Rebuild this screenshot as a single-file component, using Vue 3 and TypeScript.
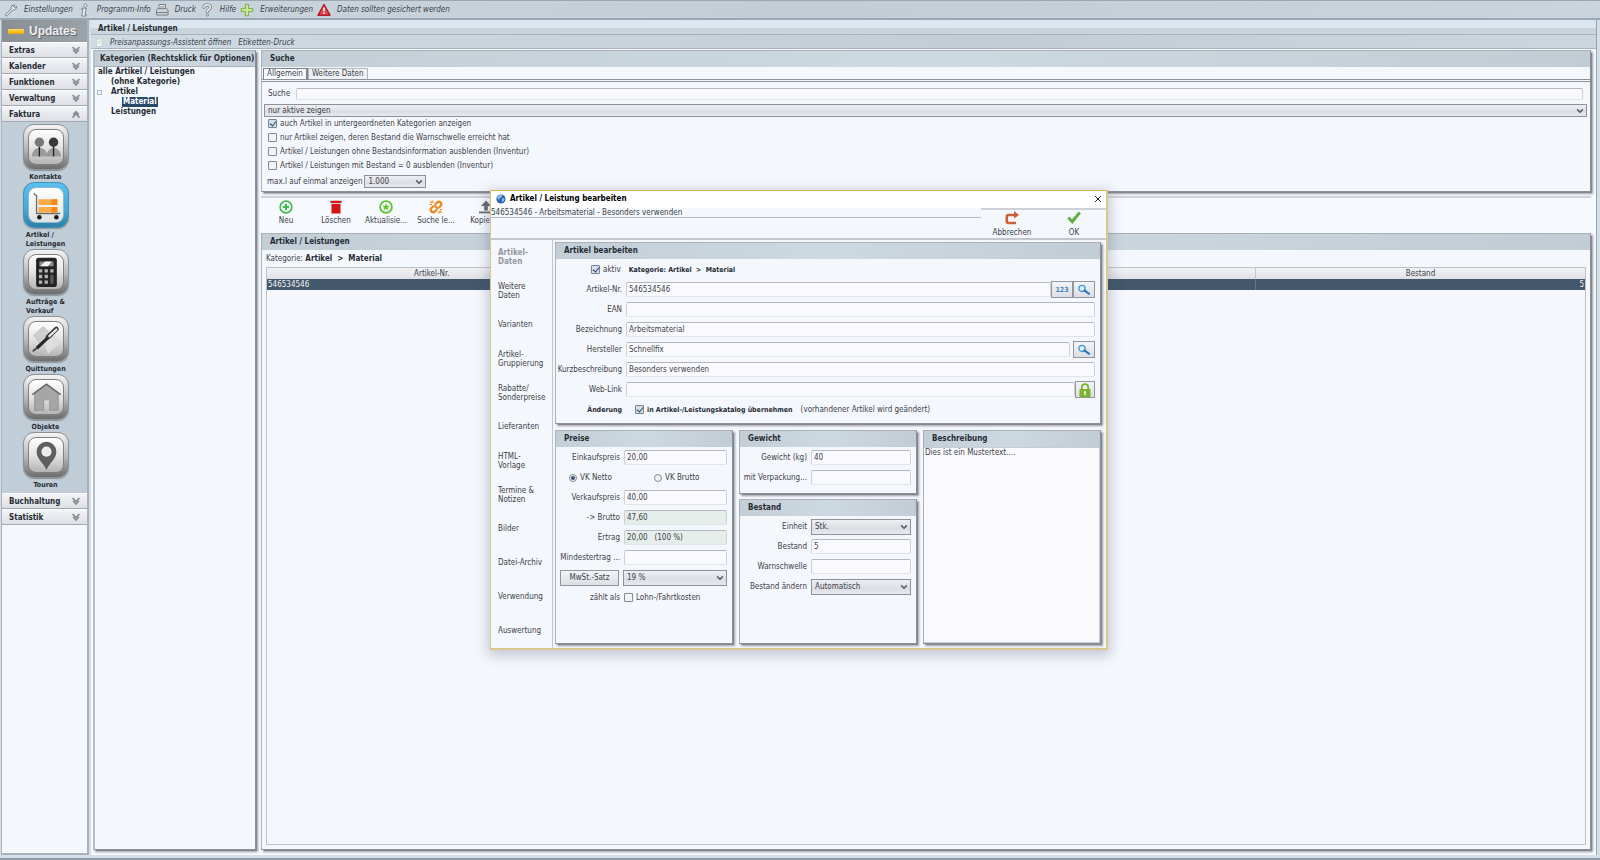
<script setup lang="ts">
import { ref } from 'vue'

type MenuItem = { icon: string; label: string }
type Tile = { icon: string; lines: string[]; active?: boolean }
type Row = { nr: string; bestand: number }

const menu: MenuItem[] = [
  { icon: 'wrench', label: 'Einstellungen' },
  { icon: 'info', label: 'Programm-Info' },
  { icon: 'printer', label: 'Druck' },
  { icon: 'help', label: 'Hilfe' },
  { icon: 'plus', label: 'Erweiterungen' },
  { icon: 'warn', label: 'Daten sollten gesichert werden' },
]
const sectionsTop = ['Extras', 'Kalender', 'Funktionen', 'Verwaltung', 'Faktura']
const sectionsBottom = ['Buchhaltung', 'Statistik']
const tiles: Tile[] = [
  { icon: 'people', lines: ['Kontakte'] },
  { icon: 'cart', lines: ['Artikel /', 'Leistungen'], active: true },
  { icon: 'calc', lines: ['Aufträge &', 'Verkauf'] },
  { icon: 'pen', lines: ['Quittungen'] },
  { icon: 'house', lines: ['Objekte'] },
  { icon: 'pin', lines: ['Touren'] },
]
const tools: MenuItem[] = [
  { icon: 'new', label: 'Neu' },
  { icon: 'trash', label: 'Löschen' },
  { icon: 'refresh', label: 'Aktualisie...' },
  { icon: 'unlink', label: 'Suche le...' },
  { icon: 'copy', label: 'Kopieren' },
]
const dialogNav: string[][] = [
  ['Artikel-', 'Daten'],
  ['Weitere', 'Daten'],
  ['Varianten'],
  ['Artikel-', 'Gruppierung'],
  ['Rabatte/', 'Sonderpreise'],
  ['Lieferanten'],
  ['HTML-', 'Vorlage'],
  ['Termine &', 'Notizen'],
  ['Bilder'],
  ['Datei-Archiv'],
  ['Verwendung'],
  ['Auswertung'],
]
const rows: Row[] = [{ nr: '546534546', bestand: 5 }]

const filters = ref([
  { label: 'auch Artikel in untergeordneten Kategorien anzeigen', on: true },
  { label: 'nur Artikel zeigen, deren Bestand die Warnschwelle erreicht hat', on: false },
  { label: 'Artikel / Leistungen ohne Bestandsinformation ausblenden (Inventur)', on: false },
  { label: 'Artikel / Leistungen mit Bestand = 0 ausblenden (Inventur)', on: false },
])
const search = ref('')
const item = ref({
  aktiv: true,
  nr: '546534546',
  ean: '',
  bezeichnung: 'Arbeitsmaterial',
  hersteller: 'Schnellfix',
  kurz: 'Besonders verwenden',
  link: '',
  katalog: true,
  einkauf: '20,00',
  vk: 'netto',
  verkauf: '40,00',
  brutto: '47,60',
  ertrag: '20,00   (100 %)',
  mindest: '',
  lohn: false,
  gewicht: '40',
  verpackung: '',
  bestand: '5',
  warn: '',
  text: 'Dies ist ein Mustertext....',
})
</script>

<template>
  <div class="app">
    <svg class="defs" width="0" height="0" aria-hidden="true">
      <symbol id="chev" viewBox="0 0 8 6"><path d="M1.2 1.4 4 4.2 6.8 1.4" fill="none" stroke="#555c64" stroke-width="1.5" /></symbol>
      <symbol id="lens" viewBox="0 0 14 12">
        <circle cx="5" cy="4.4" r="3.1" fill="#e3f1fb" stroke="#3f9ad8" stroke-width="1.3" />
        <path d="M7.4 6.4 12 9.8" stroke="#2b6cb4" stroke-width="2" stroke-linecap="round" />
      </symbol>
    </svg>

    <nav class="menubar">
      <a v-for="m in menu" :key="m.label" href="#" class="menu-item">
        <svg class="menu-icon" viewBox="0 0 14 14" aria-hidden="true">
          <path v-if="m.icon === 'wrench'" d="M1.5 11.6 7.2 6C6.6 3.8 8.3 1.6 10.8 2L9.4 3.6 10.6 4.8 12.4 3.4C13 5.8 10.8 7.6 8.5 7.1L3 12.8C1.8 13.4 1 12.6 1.5 11.6Z" fill="#eceff2" stroke="#757c84" stroke-width="1" />
          <g v-else-if="m.icon === 'info'" fill="#f0f2f4" stroke="#737a82" stroke-width=".9">
            <circle cx="8.4" cy="2.4" r="1.6" />
            <path d="M5 5.2H9.2L7.9 11.4H9.4L9 13H4.6L6 6.8H4.6Z" />
          </g>
          <g v-else-if="m.icon === 'printer'" stroke="#797f86" stroke-width="1">
            <path d="M4 1.5H10.5V7H4Z" fill="#eef0f2" />
            <path d="M1.5 7 3 5.6H11.6L13 7V12H1.5Z" fill="#d0d4d8" />
            <path d="M2 9.5H12.6" /><path d="M5 3.3H9.6M5 4.8H9.6" stroke-width=".6" />
          </g>
          <g v-else-if="m.icon === 'help'" fill="none" stroke-linecap="round">
            <path d="M4 4.2C4 .9 10.6 1 10.4 4.4 10.2 6.6 7.3 6.4 7.2 8.9" stroke="#7b828a" stroke-width="3.2" />
            <path d="M4 4.2C4 .9 10.6 1 10.4 4.4 10.2 6.6 7.3 6.4 7.2 8.9" stroke="#f1f3f5" stroke-width="1.5" />
            <circle cx="7.2" cy="12" r="1.2" fill="#f1f3f5" stroke="#7b828a" stroke-width=".8" />
          </g>
          <path v-else-if="m.icon === 'plus'" d="M5.4 1.4H8.6V5.6H12.8V8.6H8.6V12.8H5.4V8.6H1.2V5.6H5.4Z" fill="#cdea9c" stroke="#74a83c" stroke-width=".9" />
          <g v-else>
            <path d="M7 1.6 13 12.2H1Z" fill="#e04a4f" stroke="#b01f2a" stroke-width="1.4" stroke-linejoin="round" />
            <path d="M7 4.4V8.4M7 9.6V11" stroke="#fff" stroke-width="1.5" />
          </g>
        </svg>
        {{ m.label }}
      </a>
    </nav>

    <div class="body">
      <aside class="sidebar">
        <button type="button" class="updates"><i class="dash"></i>Updates</button>
        <button v-for="s in sectionsTop" :key="s" type="button" class="section">
          {{ s }}
          <svg viewBox="0 0 10 9" class="dbl" aria-hidden="true">
            <path v-if="s !== 'Faktura'" d="M1.5 1 5 4.4 8.5 1M2 3.8 5 7 8 3.8" />
            <path v-else d="M1.5 7.6 5 4 8.5 7.6M2.2 4.6 5 1.6 7.8 4.6" />
          </svg>
        </button>
        <div class="tiles">
          <button v-for="t in tiles" :key="t.icon" type="button" class="tile" :class="{ active: t.active }">
            <span class="tile-frame">
              <svg viewBox="0 0 36 36" aria-hidden="true">
                <g v-if="t.icon === 'people'">
                  <path d="M3 28C4 20 8 19 11 19S17 20 19 25C21 20 24 19 26 19S33 20 34 28Z" fill="#9b9b9b" />
                  <path d="M11 17V28M26 17V28" stroke="#222" stroke-width="1.4" />
                  <circle cx="11" cy="13" r="5" fill="#777" /><circle cx="26" cy="13" r="5" fill="#3a3a3a" />
                </g>
                <g v-else-if="t.icon === 'cart'">
                  <path d="M5 6 8 8V27H33" fill="none" stroke="#6c6c6c" stroke-width="1.4" />
                  <path d="M10 12H30V18H10ZM10 20H30V26H10Z" fill="#fbab4a" />
                  <path d="M24 12H30V18H24ZM24 20H30V26H24Z" fill="#f58a17" />
                  <circle cx="11" cy="31" r="2.4" fill="#1a1a1a" /><circle cx="29" cy="31" r="2.4" fill="#1a1a1a" />
                </g>
                <g v-else-if="t.icon === 'calc'">
                  <rect x="7.5" y="3" width="22" height="31" rx="2.5" fill="#232323" />
                  <path d="M11 7H26V12H11Z" fill="#8c8c8c" /><path d="M17 7H24L20 12H12Z" fill="#f2f2f2" />
                  <path d="M10.5 15H14V18.5H10.5ZM16.5 15H20V18.5H16.5ZM22.5 15H26V18.5H22.5ZM10.5 21H14V24.5H10.5ZM16.5 21H20V24.5H16.5ZM10.5 27H14V30.5H10.5ZM16.5 27H20V30.5H16.5Z" fill="#b5b5b5" />
                  <path d="M22.5 21H26V30.5H22.5Z" fill="#5a5a5a" />
                </g>
                <g v-else-if="t.icon === 'pen'">
                  <path d="M5 14 15 5 32 22 20 33Z" fill="#cfcfcf" stroke="#bcbcbc" />
                  <path d="M15 18 22 13 33 22 20 34Z" fill="#dedede" />
                  <path d="M9 27 26 11" stroke="#262626" stroke-width="3.4" stroke-linecap="round" />
                  <path d="M20 16 29 7.5" stroke="#333" stroke-width="5" stroke-linecap="round" />
                  <path d="M21.5 15 29 8" stroke="#e8e8e8" stroke-width="2.4" stroke-linecap="round" />
                  <path d="M4 31 9 27" stroke="#444" stroke-width="2" />
                </g>
                <g v-else-if="t.icon === 'house'">
                  <path d="M6 15 18.5 5 31 15V32H22V21H15.5V32H6Z" fill="#a6a6a6" stroke="#8d8d8d" stroke-width=".8" />
                  <path d="M3.5 15.5 18.5 4.500 33.5 15.5" fill="none" stroke="#666" stroke-width="1.6" />
                </g>
                <g v-else>
                  <path d="M18.5 34C16 27 8 22 8 14.5A10.5 10.5 0 0 1 29 14.5C29 22 21 27 18.5 34Z" fill="#5e5e5e" />
                  <circle cx="18.5" cy="14.5" r="5.4" fill="#ececec" />
                </g>
              </svg>
            </span>
            <span class="tile-label"><span v-for="l in t.lines" :key="l">{{ l }}</span></span>
          </button>
        </div>
        <button v-for="s in sectionsBottom" :key="s" type="button" class="section">
          {{ s }}
          <svg viewBox="0 0 10 9" class="dbl" aria-hidden="true"><path d="M1.5 1 5 4.4 8.5 1M2 3.8 5 7 8 3.8" /></svg>
        </button>
        <div class="side-rest"></div>
      </aside>

      <main class="main">
        <h1 class="page-title">Artikel / Leistungen</h1>
        <nav class="submenu">
          <svg class="doc" viewBox="0 0 8 10" aria-hidden="true"><path d="M.5 1H7V9.5H.5Z" fill="#f3f6f3" stroke="#b9c6bd" stroke-width=".7" /><path d="M2 3.5H6M2 5.5H5" stroke="#c5d6bd" /></svg>
          <a href="#">Preisanpassungs-Assistent öffnen</a>
          <a href="#">Etiketten-Druck</a>
        </nav>

        <div class="content">
          <section class="panel categories">
            <h2>Kategorien (Rechtsklick für Optionen)</h2>
            <ul class="tree">
              <li class="l0">alle Artikel / Leistungen</li>
              <li class="l1">(ohne Kategorie)</li>
              <li class="l1"><button type="button" class="toggle" aria-label="Artikel einklappen"></button>Artikel</li>
              <li class="l2"><span class="sel">Material</span></li>
              <li class="l1">Leistungen</li>
            </ul>
          </section>

          <div class="right">
            <section class="panel search">
              <h2>Suche</h2>
              <div class="tabs">
                <button type="button" class="tab on">Allgemein</button>
                <button type="button" class="tab">Weitere Daten</button>
              </div>
              <div class="search-body">
                <div class="search-line">
                  <label for="q">Suche</label>
                  <input id="q" v-model="search" type="text" class="field" />
                </div>
                <span class="select wide">
                  <select aria-label="Status"><option>nur aktive zeigen</option></select>
                  <svg class="arrow"><use href="#chev" /></svg>
                </span>
                <label v-for="f in filters" :key="f.label" class="check">
                  <input v-model="f.on" type="checkbox" />{{ f.label }}
                </label>
                <div class="max-line">
                  <label for="max">max.l auf einmal anzeigen</label>
                  <span class="select">
                    <select id="max"><option>1.000</option></select>
                    <svg class="arrow"><use href="#chev" /></svg>
                  </span>
                </div>
              </div>
            </section>

            <div class="toolbar">
              <button v-for="t in tools" :key="t.icon" type="button" class="tool">
                <svg viewBox="0 0 14 14" aria-hidden="true">
                  <g v-if="t.icon === 'new'" fill="none" stroke="#3fb950"><circle cx="7" cy="7" r="5.9" stroke-width="1.6" /><path d="M7 3.8V10.2M3.8 7H10.2" stroke-width="2" /></g>
                  <path v-else-if="t.icon === 'trash'" d="M1.5 .8H12.5V3H1.5ZM2.5 3.8H11.5V13.5H2.5Z" fill="#d3121b" />
                  <g v-else-if="t.icon === 'refresh'"><circle cx="7" cy="7" r="5.9" fill="none" stroke="#5cc32a" stroke-width="1.8" /><path d="M7 3.2 8 5.8 10.8 5.9 8.6 7.6 9.4 10.3 7 8.7 4.6 10.3 5.4 7.6 3.2 5.9 6 5.8Z" fill="#5cc32a" /></g>
                  <g v-else-if="t.icon === 'unlink'" fill="none" stroke="#ee8a1c" stroke-width="2.3">
                    <path d="M6 4.500 8.5 2.2C10.8 .8 13.4 3.5 11.8 5.8L9.5 8" /><path d="M8 9.500 5.500 11.800C3.200 13.200 .6 10.500 2.200 8.200L4.500 6" /><path d="M5 5 9 9" />
                    <path d="M.6 4.500H3M4 .6V3M13.4 9.500H11M10 13.400V11M1.200 1.200 3 3M12.800 12.800 11 11" stroke-width="1.2" />
                  </g>
                  <g v-else fill="#6b6e72"><path d="M7 .5 12 6H8.8V10.5H5.2V6H2Z" /><path d="M0 11.5H14V13.3H0Z" /></g>
                </svg>
                {{ t.label }}
              </button>
            </div>

            <section class="panel list">
              <h2>Artikel / Leistungen</h2>
              <p class="crumb">Kategorie: <strong>Artikel&nbsp; &gt;&nbsp; Material</strong></p>
              <div class="table-box">
                <table>
                  <thead><tr><th>Artikel-Nr.</th><th></th><th></th><th>Bestand</th></tr></thead>
                  <tbody><tr v-for="r in rows" :key="r.nr"><td>{{ r.nr }}</td><td></td><td></td><td class="num">{{ r.bestand }}</td></tr></tbody>
                </table>
              </div>
            </section>
          </div>
        </div>
      </main>
    </div>

    <div class="overlay">
      <div class="dialog" role="dialog" aria-labelledby="dlg-title">
        <header class="dlg-title">
          <svg class="globe" viewBox="0 0 10 10" aria-hidden="true"><circle cx="5" cy="5" r="4.6" fill="#2c67b0" /><path d="M1.5 3C3 .8 5.5 .8 6.5 1.5 6 3 4 3.5 3 5.5 2 5.5 1 4.5 1.5 3ZM6 4.5 8.5 4C8.5 6.5 7.5 8 6 8Z" fill="#8fc0ea" /></svg>
          <strong id="dlg-title">Artikel / Leistung bearbeiten</strong>
          <button type="button" class="close" aria-label="Schließen"><svg viewBox="0 0 8 8"><path d="M1 1 7 7M7 1 1 7" stroke="#222" stroke-width="1" /></svg></button>
        </header>
        <div class="dlg-bar">
          <p class="dlg-sub">546534546 - Arbeitsmaterial - Besonders verwenden</p>
          <div class="dlg-actions">
            <button type="button" class="tool">
              <svg viewBox="0 0 14 14" aria-hidden="true"><path d="M9.5 4H3.5Q1.8 4 1.8 5.7V10.3Q1.8 12 3.5 12H11" fill="none" stroke="#c9603a" stroke-width="2.6" /><path d="M9 0 14 4 9 7.6Z" fill="#c9603a" /></svg>
              Abbrechen
            </button>
            <button type="button" class="tool">
              <svg viewBox="0 0 14 14" aria-hidden="true"><path d="M.3 7.5 2.3 5.5 5 8.2 11.8 .5 13.8 2.4 5.3 13Z" fill="#5fae46" /></svg>
              OK
            </button>
          </div>
        </div>
        <div class="dlg-body">
          <nav class="dlg-nav">
            <a v-for="(n, i) in dialogNav" :key="i" href="#" :class="{ current: i === 0 }"><span v-for="l in n" :key="l">{{ l }}</span></a>
          </nav>
          <div class="dlg-content">
            <section class="panel edit">
              <h2>Artikel bearbeiten</h2>
              <div class="rows">
                <div class="row aktiv">
                  <label class="check"><input v-model="item.aktiv" type="checkbox" />aktiv</label>
                  <strong>Kategorie: Artikel&nbsp; &gt;&nbsp; Material</strong>
                </div>
                <div class="row">
                  <label for="nr">Artikel-Nr.</label>
                  <span class="joined">
                    <input id="nr" v-model="item.nr" type="text" class="field" />
                    <button type="button" class="btn num123">123</button><button type="button" class="btn" aria-label="Artikel-Nr. suchen"><svg class="lens"><use href="#lens" /></svg></button>
                  </span>
                </div>
                <div class="row"><label for="ean">EAN</label><input id="ean" v-model="item.ean" type="text" class="field" /></div>
                <div class="row"><label for="bez">Bezeichnung</label><input id="bez" v-model="item.bezeichnung" type="text" class="field" /></div>
                <div class="row">
                  <label for="her">Hersteller</label>
                  <span class="joined spaced">
                    <input id="her" v-model="item.hersteller" type="text" class="field" />
                    <button type="button" class="btn" aria-label="Hersteller suchen"><svg class="lens"><use href="#lens" /></svg></button>
                  </span>
                </div>
                <div class="row"><label for="kurz">Kurzbeschreibung</label><input id="kurz" v-model="item.kurz" type="text" class="field" /></div>
                <div class="row">
                  <label for="link">Web-Link</label>
                  <span class="joined">
                    <input id="link" v-model="item.link" type="text" class="field" />
                    <button type="button" class="btn lock" aria-label="Link öffnen"><svg viewBox="0 0 14 14"><path d="M3.8 7V4.2C3.8 .2 10.2 .2 10.2 4.2V7" fill="none" stroke="#7cb32c" stroke-width="1.8" /><path d="M1.5 6H12.5V14H1.5Z" fill="#7cb32c" /><path d="M7 8.3V12M6 9H7" stroke="#fff" stroke-width="1.4" /></svg></button>
                  </span>
                </div>
                <div class="row change">
                  <strong>Änderung</strong>
                  <span><label class="check"><input v-model="item.katalog" type="checkbox" /><strong>in Artikel-/Leistungskatalog übernehmen</strong></label><span>(vorhandener Artikel wird geändert)</span></span>
                </div>
              </div>
            </section>

            <div class="cols">
              <section class="panel prices">
                <h2>Preise</h2>
                <div class="rows">
                  <div class="row"><label for="ek">Einkaufspreis</label><input id="ek" v-model="item.einkauf" type="text" class="field" /></div>
                  <div class="row radios">
                    <label class="check"><input v-model="item.vk" type="radio" name="vk" value="netto" />VK Netto</label>
                    <label class="check"><input v-model="item.vk" type="radio" name="vk" value="brutto" />VK Brutto</label>
                  </div>
                  <div class="row"><label for="vkp">Verkaufspreis</label><input id="vkp" v-model="item.verkauf" type="text" class="field" /></div>
                  <div class="row"><label for="br">-&gt; Brutto</label><input id="br" :value="item.brutto" type="text" class="field calc" readonly /></div>
                  <div class="row"><label for="er">Ertrag</label><input id="er" :value="item.ertrag" type="text" class="field calc" readonly /></div>
                  <div class="row"><label for="me">Mindestertrag ...</label><input id="me" v-model="item.mindest" type="text" class="field" /></div>
                  <div class="row tax">
                    <button type="button" class="btn">MwSt.-Satz</button>
                    <span class="select tall"><select aria-label="MwSt.-Satz"><option>19 %</option></select><svg class="arrow"><use href="#chev" /></svg></span>
                  </div>
                  <div class="row"><span class="lbl">zählt als</span><label class="check"><input v-model="item.lohn" type="checkbox" />Lohn-/Fahrtkosten</label></div>
                </div>
              </section>

              <div class="stack">
                <section class="panel weight">
                  <h2>Gewicht</h2>
                  <div class="rows">
                    <div class="row"><label for="kg">Gewicht (kg)</label><input id="kg" v-model="item.gewicht" type="text" class="field" /></div>
                    <div class="row"><label for="vp">mit Verpackung...</label><input id="vp" v-model="item.verpackung" type="text" class="field" /></div>
                  </div>
                </section>
                <section class="panel stock">
                  <h2>Bestand</h2>
                  <div class="rows">
                    <div class="row"><label for="eh">Einheit</label><span class="select tall"><select id="eh"><option>Stk.</option></select><svg class="arrow"><use href="#chev" /></svg></span></div>
                    <div class="row"><label for="be">Bestand</label><input id="be" v-model="item.bestand" type="text" class="field" /></div>
                    <div class="row"><label for="wa">Warnschwelle</label><input id="wa" v-model="item.warn" type="text" class="field" /></div>
                    <div class="row"><label for="ba">Bestand ändern</label><span class="select tall"><select id="ba"><option>Automatisch</option></select><svg class="arrow"><use href="#chev" /></svg></span></div>
                  </div>
                </section>
              </div>

              <section class="panel desc">
                <h2 id="desc-h">Beschreibung</h2>
                <textarea v-model="item.text" aria-labelledby="desc-h"></textarea>
              </section>
            </div>
          </div>
        </div>
      </div>
    </div>
  </div>
</template>

<style>
body { background: #cfdae2; }
</style>

<style scoped>
* { box-sizing: border-box; }
.app {
  position: relative;
  display: flex;
  flex-direction: column;
  min-height: 100vh;
  font: 8px/10px "DejaVu Sans Condensed", "DejaVu Sans", sans-serif;
  color: #3c4249;
  background: #d5dfe7;
  border-bottom: 2px solid #8f9ba8;
}
.defs { position: absolute; }
h1, h2, p, ul { margin: 0; padding: 0; font-size: inherit; }
button, input, select, textarea { font: inherit; color: inherit; margin: 0; padding: 0; border: 0; border-radius: 0; background: none; outline: 0; }
button { cursor: pointer; }
a { color: inherit; text-decoration: none; }
strong { color: #262c34; }

.menubar {
  display: flex;
  gap: 4px;
  height: 20px;
  padding: 0 4px;
  align-items: center;
  font-style: italic;
  background: linear-gradient(90deg, #cbd6de, #c3cdd6 50%, #cad4dc);
  border-top: 1px solid #9ba7b3;
  border-bottom: 2px solid #9aa7b4;
}
.menu-item { display: flex; align-items: center; gap: 6px; white-space: nowrap; }
.menu-icon { width: 14px; height: 14px; }

.body { display: flex; flex: 1; padding: 0 3px 3px 1px; }
.sidebar {
  display: flex;
  flex-direction: column;
  width: 88px;
  background: linear-gradient(90deg, #c3cfd8, #bfcbd5);
  border: 1px solid #a7b2be;
  border-width: 0 2px 2px 1px;
}
.updates {
  display: flex;
  align-items: center;
  gap: 5px;
  height: 22px;
  padding-left: 6px;
  font: bold 12px/14px "Liberation Sans", Arial, sans-serif;
  color: #eceef0;
  text-shadow: 1px 1px 1px #5c6268;
  background: linear-gradient(90deg, #878e94, #9ba2a8);
}
.dash { width: 16px; height: 5px; border-radius: 1px; background: linear-gradient(#ffd95a, #f0a800); }
.section {
  display: flex;
  align-items: center;
  justify-content: space-between;
  height: 16px;
  padding: 1px 6px 0 7px;
  font-weight: bold;
  color: #262c34;
  text-align: left;
  background: linear-gradient(#f3f4f7, #dddfe5);
  border-bottom: 1px solid #a3a8b2;
  border-top: 1px solid #fdfdfe;
}
.dbl { width: 10px; height: 9px; fill: none; stroke: #8a8f95; stroke-width: 1.6px; }
.tiles { display: flex; flex-direction: column; align-items: center; padding: 2px 0 3px 2px; }
.tile { display: flex; flex-direction: column; align-items: center; }
.tile-frame {
  width: 46px;
  height: 46px;
  padding: 4px;
  border-radius: 11px;
  background: linear-gradient(#f4f4f4, #b5b5b5 55%, #6d6d6d);
  border: 1px solid #8e9296;
  box-shadow: 0 1px 1px #8a949c;
}
.tile-frame svg {
  display: block;
  width: 36px;
  height: 36px;
  border: 1px solid #808080;
  border-radius: 8px;
  background: linear-gradient(#ffffff, #e4e4e4 50%, #b4b4b4);
}
.tile.active .tile-frame { background: linear-gradient(#56c0ee, #4aa8d4 60%, #2c7fa8); border-color: #4b8fb2; }
.tile.active svg { border-color: #8fb9cc; background: linear-gradient(#ffffff, #dfe2e4); }
.tile-label { display: flex; flex-direction: column; padding: 3px 0 0; font-size: 7px; font-weight: bold; line-height: 9px; color: #262c34; text-align: left; }
.side-rest { flex: 1; background: #f4f7fc; border-bottom: 1px solid #fff; }

.main {
  flex: 1;
  display: flex;
  flex-direction: column;
  min-width: 0;
  margin-left: 2px;
  background: #f6f9fd;
  border-right: 1px solid #97a4b0;
}
.page-title { height: 15px; padding: 4px 7px 0; font-weight: bold; color: #262c34; background: linear-gradient(#dbe6ee 8px, #c9d4dc 8px); border-bottom: 1px solid #a7b2bd; }
.submenu {
  display: flex;
  align-items: center;
  height: 14px;
  gap: 7px;
  padding: 2px 5px 0;
  font-style: italic;
  background: linear-gradient(90deg, #cfdae2, #c2cdd6 60%, #cbd6de);
  border-bottom: 1px solid #a7b2bd;
}
.doc { width: 7px; height: 9px; }
.content { flex: 1; display: flex; gap: 5px; padding: 1px 5px 5px 2px; }

.panel { display: flex; flex-direction: column; background: #f4f7fc; border: 1px solid #a9b0b8; border-right-color: #8b9097; border-bottom-color: #8b9097; box-shadow: 2px 2px 0 -1px #85898f, 2px 2px 2px #9a9fa6; }
.panel h2 { height: 16px; padding: 0 8px; font-weight: bold; line-height: 16px; color: #262c34; background: linear-gradient(90deg, #c3ced7, #cdd9e0 50%, #c2ccd5); white-space: nowrap; }
.categories { width: 163px; border-left: 2px solid #b9bfc7; }
.categories h2 { border-bottom: 1px solid #a9b0b8; padding: 0 5px; }
.tree { list-style: none; font-weight: bold; color: #262c34; }
.tree li { position: relative; height: 10px; padding-left: 3px; white-space: nowrap; }
.tree .l1 { padding-left: 16px; }
.tree .l2 { padding-left: 27px; }
.sel { display: inline-block; padding: 0 1px; color: #fff; background: #27496a; }
.toggle { position: absolute; left: 2px; top: 3px; width: 5px; height: 5px; border: 1px solid #b3bac2; }

.right { flex: 1; display: flex; flex-direction: column; min-width: 0; }
.tabs { display: flex; align-items: flex-end; height: 15px; padding-left: 1px; border-bottom: 3px double #8e939a; }
.tab { height: 11px; padding: 0 3px; border: 1px solid #b3b7bd; border-bottom: 0; background: #eef0f4; }
.tab.on { border-color: #7d848f; border-width: 1px 2px 0 1px; background: #fafbfe; }
.search-body { display: flex; flex-direction: column; align-items: flex-start; padding: 6px 3px 3px 2px; }
.search-line { display: flex; align-items: center; gap: 6px; width: 100%; padding: 0 4px; margin-bottom: 4px; }
.field {
  min-width: 0;
  width: 100%;
  flex: 1;
  height: 15px;
  padding: 0 2px;
  border: 1px solid #e1e4e9;
  border-top-color: #b4b8be;
  border-left-color: #cdd0d6;
  border-right-color: #cdd0d6;
  border-radius: 2px;
  background: #fafafe;
}
.search-line .field { height: 12px; }
.calc { background: #e6eeeb; }
.select { position: relative; display: block; flex: 1; height: 13px; }
.select select { appearance: none; display: block; width: 100%; height: 100%; padding: 0 14px 0 3px; border: 1px solid #8d9199; background: linear-gradient(#eeeff3, #dcdee4 60%, #e8e9ee); }
.select.wide { width: 100%; flex: none; }
.select.tall { height: 16px; }
.arrow { position: absolute; right: 3px; top: 50%; width: 8px; height: 6px; margin-top: -3px; pointer-events: none; }
.check { display: flex; align-items: center; gap: 3px; white-space: nowrap; }
.search-body .check { height: 14px; padding-left: 4px; }
.check input { appearance: none; position: relative; flex: none; width: 9px; height: 9px; margin-bottom: 1px; border: 1px solid #858a92; border-radius: 1px; background: #f2f3f7; }
.check input[type="checkbox"]:checked { background: #d3deea; border-color: #74859a; }
.check input[type="checkbox"]:checked::after { content: ""; position: absolute; left: 2px; top: 0; width: 3px; height: 5px; border: solid #2c4763; border-width: 0 1px 1px 0; transform: rotate(38deg); }
.check input[type="radio"] { width: 8px; height: 8px; margin: 0; border-radius: 50%; }
.check input[type="radio"]:checked::after { content: ""; position: absolute; left: 1px; top: 1px; width: 4px; height: 4px; border-radius: 50%; background: #3c526a; }
.max-line { display: flex; align-items: center; gap: 2px; padding: 2px 0 0 3px; }
.max-line .select { width: 62px; flex: none; }

.toolbar { display: flex; height: 34px; margin: 4px 0 3px; padding-top: 2px; border-top: 2px solid #d0d3d8; }
.tool { display: flex; flex-direction: column; align-items: center; gap: 3px; width: 50px; white-space: nowrap; }
.tool svg { width: 14px; height: 14px; flex: none; }
.toolbar .tool { gap: 2px; }
.list { flex: 1; }
.crumb { height: 17px; padding: 0 4px; line-height: 17px; }
.table-box { flex: 1; margin: 0 4px 4px; border: 1px solid #bfc3c9; }
table { width: 100%; border-collapse: collapse; table-layout: fixed; }
th { height: 11px; padding: 0; font-weight: normal; line-height: 9px; background: linear-gradient(#f1f2f5, #dfe1e6); border-right: 1px solid #c3c7cd; }
th:last-child, td:last-child { border-right: 0; }
th:first-child, th:nth-child(2) { border-right: 0; }
td { height: 11px; padding: 0 1px; color: #f1f4f7; background: #43586b; }
td:nth-child(3) { border-right: 1px solid #64788a; }
.num { text-align: right; }

.overlay { position: absolute; inset: 0; display: flex; align-items: center; justify-content: center; padding: 0 2px 19px 0; pointer-events: none; }
.dialog {
  display: flex;
  flex-direction: column;
  width: 618px;
  pointer-events: auto;
  background: #f4f7fc;
  border: 2px solid #d9c78d;
  border-width: 1px 2px 2px 1px;
  border-top-color: #dcb652;
  box-shadow: 0 3px 12px 2px rgba(60, 70, 90, .28);
}
.dlg-title { display: flex; align-items: center; gap: 4px; height: 17px; padding: 0 4px 0 5px; background: #fff; }
.dlg-title strong { flex: 1; color: #000; }
.globe { width: 10px; height: 10px; }
.close { width: 8px; height: 8px; }
.close svg { display: block; }
.dlg-bar { display: flex; height: 32px; border-bottom: 2px solid #c3c7cd; }
.dlg-sub { flex: 1; align-self: flex-start; height: 10px; border-bottom: 1px solid #b6bac1; }
.dlg-actions { display: flex; width: 125px; padding-top: 1px; border-top: 2px solid #cdd0d5; }
.dlg-actions .tool { width: 62px; }
.dlg-body { display: flex; }
.dlg-nav { display: flex; flex-direction: column; width: 62px; border-right: 1px solid #c3c7cd; }
.dlg-nav a { flex: 1; display: flex; flex-direction: column; justify-content: center; padding-left: 7px; line-height: 9px; }
.dlg-nav .current { color: #9297a0; font-weight: bold; }
.dlg-content { flex: 1; display: flex; flex-direction: column; gap: 6px; min-width: 0; padding: 2px 5px 4px 2px; }
.row { display: grid; grid-template-columns: 66px 1fr; align-items: center; gap: 4px; height: 20px; }
.row > label:first-child:not(.check), .row > .lbl, .change > strong { text-align: right; white-space: nowrap; }
.edit .rows { padding: 1px 5px 3px 0; }
.edit .row strong { font-size: 7px; }
.edit .aktiv { display: flex; gap: 8px; padding-left: 35px; }
.joined { display: flex; align-items: center; min-width: 0; }
.spaced { gap: 3px; }
.btn { height: 17px; width: 22px; flex: none; display: flex; align-items: center; justify-content: center; border: 1px solid #92979f; background: linear-gradient(#f3f4f7, #dcdee4); }
.lock { width: 20px; }
.lock svg { width: 14px; height: 14px; }
.lens { width: 14px; height: 12px; }
.num123 { font-weight: bold; font-size: 7px; color: #3d86c2; }
.change > span { display: flex; gap: 8px; padding-left: 9px; }
.cols { flex: 1; display: grid; grid-template-columns: repeat(3, 1fr); gap: 6px; }
.stack { display: flex; flex-direction: column; gap: 5px; }
.cols .rows { padding: 1px 5px 0 0; }
.prices .row { grid-template-columns: 64px 1fr; }
.prices .rows { padding-bottom: 35px; }
.prices .radios { grid-template-columns: 73px 1fr; gap: 12px; padding-left: 13px; }
.prices .tax { grid-template-columns: 59px 1fr; padding-left: 4px; }
.tax .btn { width: 100%; height: 16px; }
.stack .row { grid-template-columns: 67px 1fr; }
.weight .rows { padding-bottom: 5px; }
.stock { flex: 1; }
.desc textarea { flex: 1; resize: none; padding: 0 1px; background: #fafafd; border: 1px solid #c9cdd3; border-width: 1px 1px 1px 0; }
</style>
